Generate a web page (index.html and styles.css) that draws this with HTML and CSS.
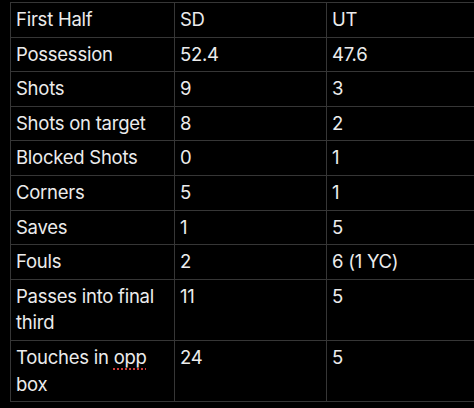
FILE: index.html
```html
<!DOCTYPE html>
<html>
<head>
<meta charset="utf-8">
<link rel="stylesheet" href="styles.css">
</head>
<body>
<div class="frame">
<table class="stats">
<colgroup><col class="c1"><col class="c2"><col class="c3"></colgroup>
<tr><td>First Half</td><td>SD</td><td>UT</td></tr>
<tr><td>Possession</td><td>52.4</td><td>47.6</td></tr>
<tr><td>Shots</td><td>9</td><td>3</td></tr>
<tr><td>Shots on target</td><td>8</td><td>2</td></tr>
<tr><td>Blocked Shots</td><td>0</td><td>1</td></tr>
<tr><td>Corners</td><td>5</td><td>1</td></tr>
<tr><td>Saves</td><td>1</td><td>5</td></tr>
<tr><td>Fouls</td><td>2</td><td>6 (1 YC)</td></tr>
<tr><td>Passes into final third</td><td>11</td><td>5</td></tr>
<tr><td>Touches in <span class="spell">opp</span> box</td><td>24</td><td>5</td></tr>
</table>
</div>
</body>
</html>
```
FILE: styles.css
```css
html, body {
  margin: 0;
  padding: 0;
  background: #000;
  overflow: hidden;
}
.frame {
  padding: 2px 0 0 10px;
  width: 480px;
}
.stats {
  border-collapse: collapse;
  table-layout: fixed;
  width: 468px;
  font-family: Inter, "Noto Sans", sans-serif;
  font-size: 18.5px;
  letter-spacing: -0.25px;
  line-height: 26.6px;
  color: #ececec;
}
.c1 { width: 164px; }
.c2 { width: 152px; }
.c3 { width: 152px; }
.stats td {
  border: 1px solid #363636;
  padding: 3px 5px 4px 5px;
  vertical-align: top;
  text-align: left;
}
.spell {
  text-decoration: underline dotted #d23a3a;
  text-decoration-thickness: 2px;
  text-underline-offset: 5px;
}
```
